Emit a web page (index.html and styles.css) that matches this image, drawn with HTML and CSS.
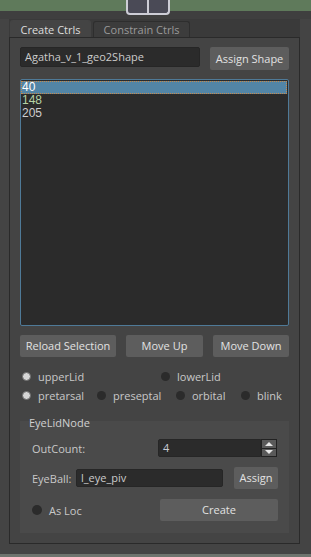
FILE: index.html
```html
<!DOCTYPE html>
<html lang="en">
<head>
  <meta charset="UTF-8">
  <meta name="viewport" content="width=device-width, initial-scale=1.0">
  <title>EyeLid Rig</title>
  <link rel="stylesheet" href="styles.css">
</head>
<body>
  <div class="header">
    <div class="dock-icon"><span></span></div>
  </div>
  <div class="tabs">
    <div class="tabbar">
      <div class="tab active">Create Ctrls</div>
      <div class="tab">Constrain Ctrls</div>
    </div>
    <div class="panel">
      <div class="shape-row">
        <div class="field shape-field">Agatha_v_1_geo2Shape</div>
        <div class="btn assign-shape">Assign Shape</div>
      </div>
      <div class="list">
        <div class="item selected">40</div>
        <div class="item green">148</div>
        <div class="item">205</div>
      </div>
      <div class="btn-row">
        <div class="btn reload">Reload Selection</div>
        <div class="btn move-up">Move Up</div>
        <div class="btn move-down">Move Down</div>
      </div>
      <div class="radio-row first">
        <div class="radio w-upper"><span class="dot on"></span>upperLid</div>
        <div class="radio"><span class="dot"></span>lowerLid</div>
      </div>
      <div class="radio-row">
        <div class="radio w-pre"><span class="dot on"></span>pretarsal</div>
        <div class="radio w-sep"><span class="dot"></span>preseptal</div>
        <div class="radio w-orb"><span class="dot"></span>orbital</div>
        <div class="radio"><span class="dot"></span>blink</div>
      </div>
      <div class="group">
        <div class="group-title">EyeLidNode</div>
        <div class="g-row count-row">
          <div class="g-label">OutCount:</div>
          <div class="spin">
            <div class="spin-val">4</div>
            <div class="spin-btns">
              <div class="spin-btn"><span class="tri up"></span></div>
              <div class="spin-btn"><span class="tri down"></span></div>
            </div>
          </div>
        </div>
        <div class="g-row eye-row">
          <div class="g-label eye-label">EyeBall:</div>
          <div class="field eye-field">l_eye_piv</div>
          <div class="btn assign">Assign</div>
        </div>
        <div class="g-row loc-row">
          <div class="radio"><span class="dot big"></span>As Loc</div>
          <div class="btn create">Create</div>
        </div>
      </div>
    </div>
  </div>
  <div class="footer-gap"></div>
  <div class="footer-line"></div>
</body>
</html>
```
FILE: styles.css
```css
body {
  margin: 0;
  width: 311px;
  height: 557px;
  overflow: hidden;
  background: #444444;
  font-family: "Open Sans", "Noto Sans", sans-serif;
  font-size: 11px;
  color: #c8c8c8;
}
.header {
  height: 19px;
  padding-left: 126px;
  background: linear-gradient(#5f7a5b 0 11px, #3f3f3f 11px);
}
.dock-icon {
  width: 40px;
  height: 13px;
  border: 2px solid #cdcdd6;
  border-top: none;
  border-radius: 0 0 4px 4px;
  background: #4a4a56;
  display: flex;
  justify-content: center;
}
.dock-icon span {
  width: 2px;
  background: #cdcdd6;
}
.tabs {
  margin: 0 11px 0 9px;
}
.tabbar {
  height: 18px;
  background: #3a3a3a;
  display: flex;
  align-items: flex-end;
  gap: 2px;
  padding-left: 1px;
}
.tab {
  box-sizing: border-box;
  width: 97px;
  height: 16px;
  line-height: 16px;
  text-align: center;
  border: 1px solid #2e2e2e;
  border-bottom: none;
  border-radius: 3px 3px 0 0;
  background: #3c3c3c;
  color: #9a9a9a;
}
.tab.active {
  width: 81px;
  height: 17px;
  line-height: 18px;
  background: #444444;
  border-color: #444444;
  color: #dddddd;
}
.panel {
  box-sizing: border-box;
  height: 507px;
  border: 1px solid #2a2a2a;
  background: #444444;
  padding: 9px 10px 0;
}
.field {
  box-sizing: border-box;
  height: 20px;
  line-height: 18px;
  padding: 0 4px;
  background: #2b2b2b;
  border: 1px solid #262626;
  border-radius: 2px;
  color: #cccccc;
  white-space: nowrap;
}
.btn {
  background: #5d5d5d;
  color: #e2e2e2;
  border-radius: 2px;
  height: 22px;
  line-height: 22px;
  text-align: center;
}
.shape-row {
  display: flex;
  justify-content: space-between;
  align-items: flex-start;
}
.shape-field {
  width: 180px;
}
.assign-shape {
  width: 79px;
  height: 23px;
  line-height: 23px;
}
.list {
  box-sizing: border-box;
  margin-top: 9px;
  height: 247px;
  border: 1px solid #4f7a98;
  border-radius: 2px;
  background: #2b2b2b;
  padding: 1px 1px 0 0;
  font-family: "Liberation Sans", sans-serif;
  font-size: 12px;
}
.item {
  height: 13px;
  line-height: 13px;
  padding-left: 1px;
  color: #cfcfcf;
}
.item.selected {
  background: #5285a6;
  color: #ffffff;
  outline: 1px dotted #c88a4a;
  outline-offset: -1px;
}
.item.green {
  color: #b5d3a5;
}
.btn-row {
  margin-top: 9px;
  display: flex;
  gap: 10px;
}
.reload { width: 96px; }
.move-up { width: 77px; }
.move-down { width: 76px; }
.radio-row {
  display: flex;
  height: 15px;
  margin-top: 4px;
  padding-left: 2px;
}
.radio-row.first {
  margin-top: 12px;
}
.radio {
  display: flex;
  align-items: center;
  white-space: nowrap;
}
.w-upper { width: 139px; }
.w-pre { width: 75px; }
.w-sep { width: 79px; }
.w-orb { width: 65px; }
.dot {
  width: 9px;
  height: 9px;
  border-radius: 50%;
  background: #2b2b2b;
  margin-right: 7px;
}
.dot.on {
  box-sizing: border-box;
  background: #d6d6d6;
  border: 1px solid #6a6a6a;
}
.dot.big {
  width: 10px;
  height: 10px;
}
.group {
  margin-top: 18px;
  height: 112px;
  box-sizing: border-box;
  background: #4a4a4a;
  padding: 0 11px 0 12px;
  display: flex;
  flex-direction: column;
}
.group-title {
  margin: -5px 0 0 -3px;
  height: 14px;
  line-height: 14px;
  color: #d0d0d0;
}
.g-row {
  display: flex;
  align-items: center;
}
.count-row {
  height: 18px;
  margin-top: 9px;
}
.g-label {
  flex: 1;
}
.spin {
  display: flex;
  width: 119px;
  height: 18px;
  margin-right: 1px;
}
.spin-val {
  flex: 1;
  box-sizing: border-box;
  background: #2b2b2b;
  border: 1px solid #262626;
  border-radius: 2px 0 0 2px;
  padding-left: 4px;
  line-height: 16px;
  color: #c8ccd6;
}
.spin-btns {
  width: 16px;
  display: flex;
  flex-direction: column;
}
.spin-btn {
  flex: 1;
  box-sizing: border-box;
  background: #5a5a5a;
  border: 1px solid #222222;
  display: flex;
  align-items: center;
  justify-content: center;
}
.spin-btn + .spin-btn {
  border-top: none;
}
.tri {
  width: 0;
  height: 0;
  border-left: 4px solid transparent;
  border-right: 4px solid transparent;
}
.tri.up {
  border-bottom: 4px solid #e6e6e6;
}
.tri.down {
  border-top: 4px solid #e6e6e6;
}
.eye-row {
  height: 22px;
  margin-top: 10px;
}
.eye-label {
  flex: none;
  width: 44px;
}
.eye-field {
  width: 147px;
  height: 18px;
  line-height: 16px;
  margin-right: 11px;
}
.assign {
  width: 44px;
}
.loc-row {
  height: 22px;
  margin-top: 10px;
}
.create {
  margin-left: auto;
  width: 118px;
}
.footer-gap {
  height: 10px;
}
.footer-line {
  height: 3px;
  background: #6e746e;
}
```
